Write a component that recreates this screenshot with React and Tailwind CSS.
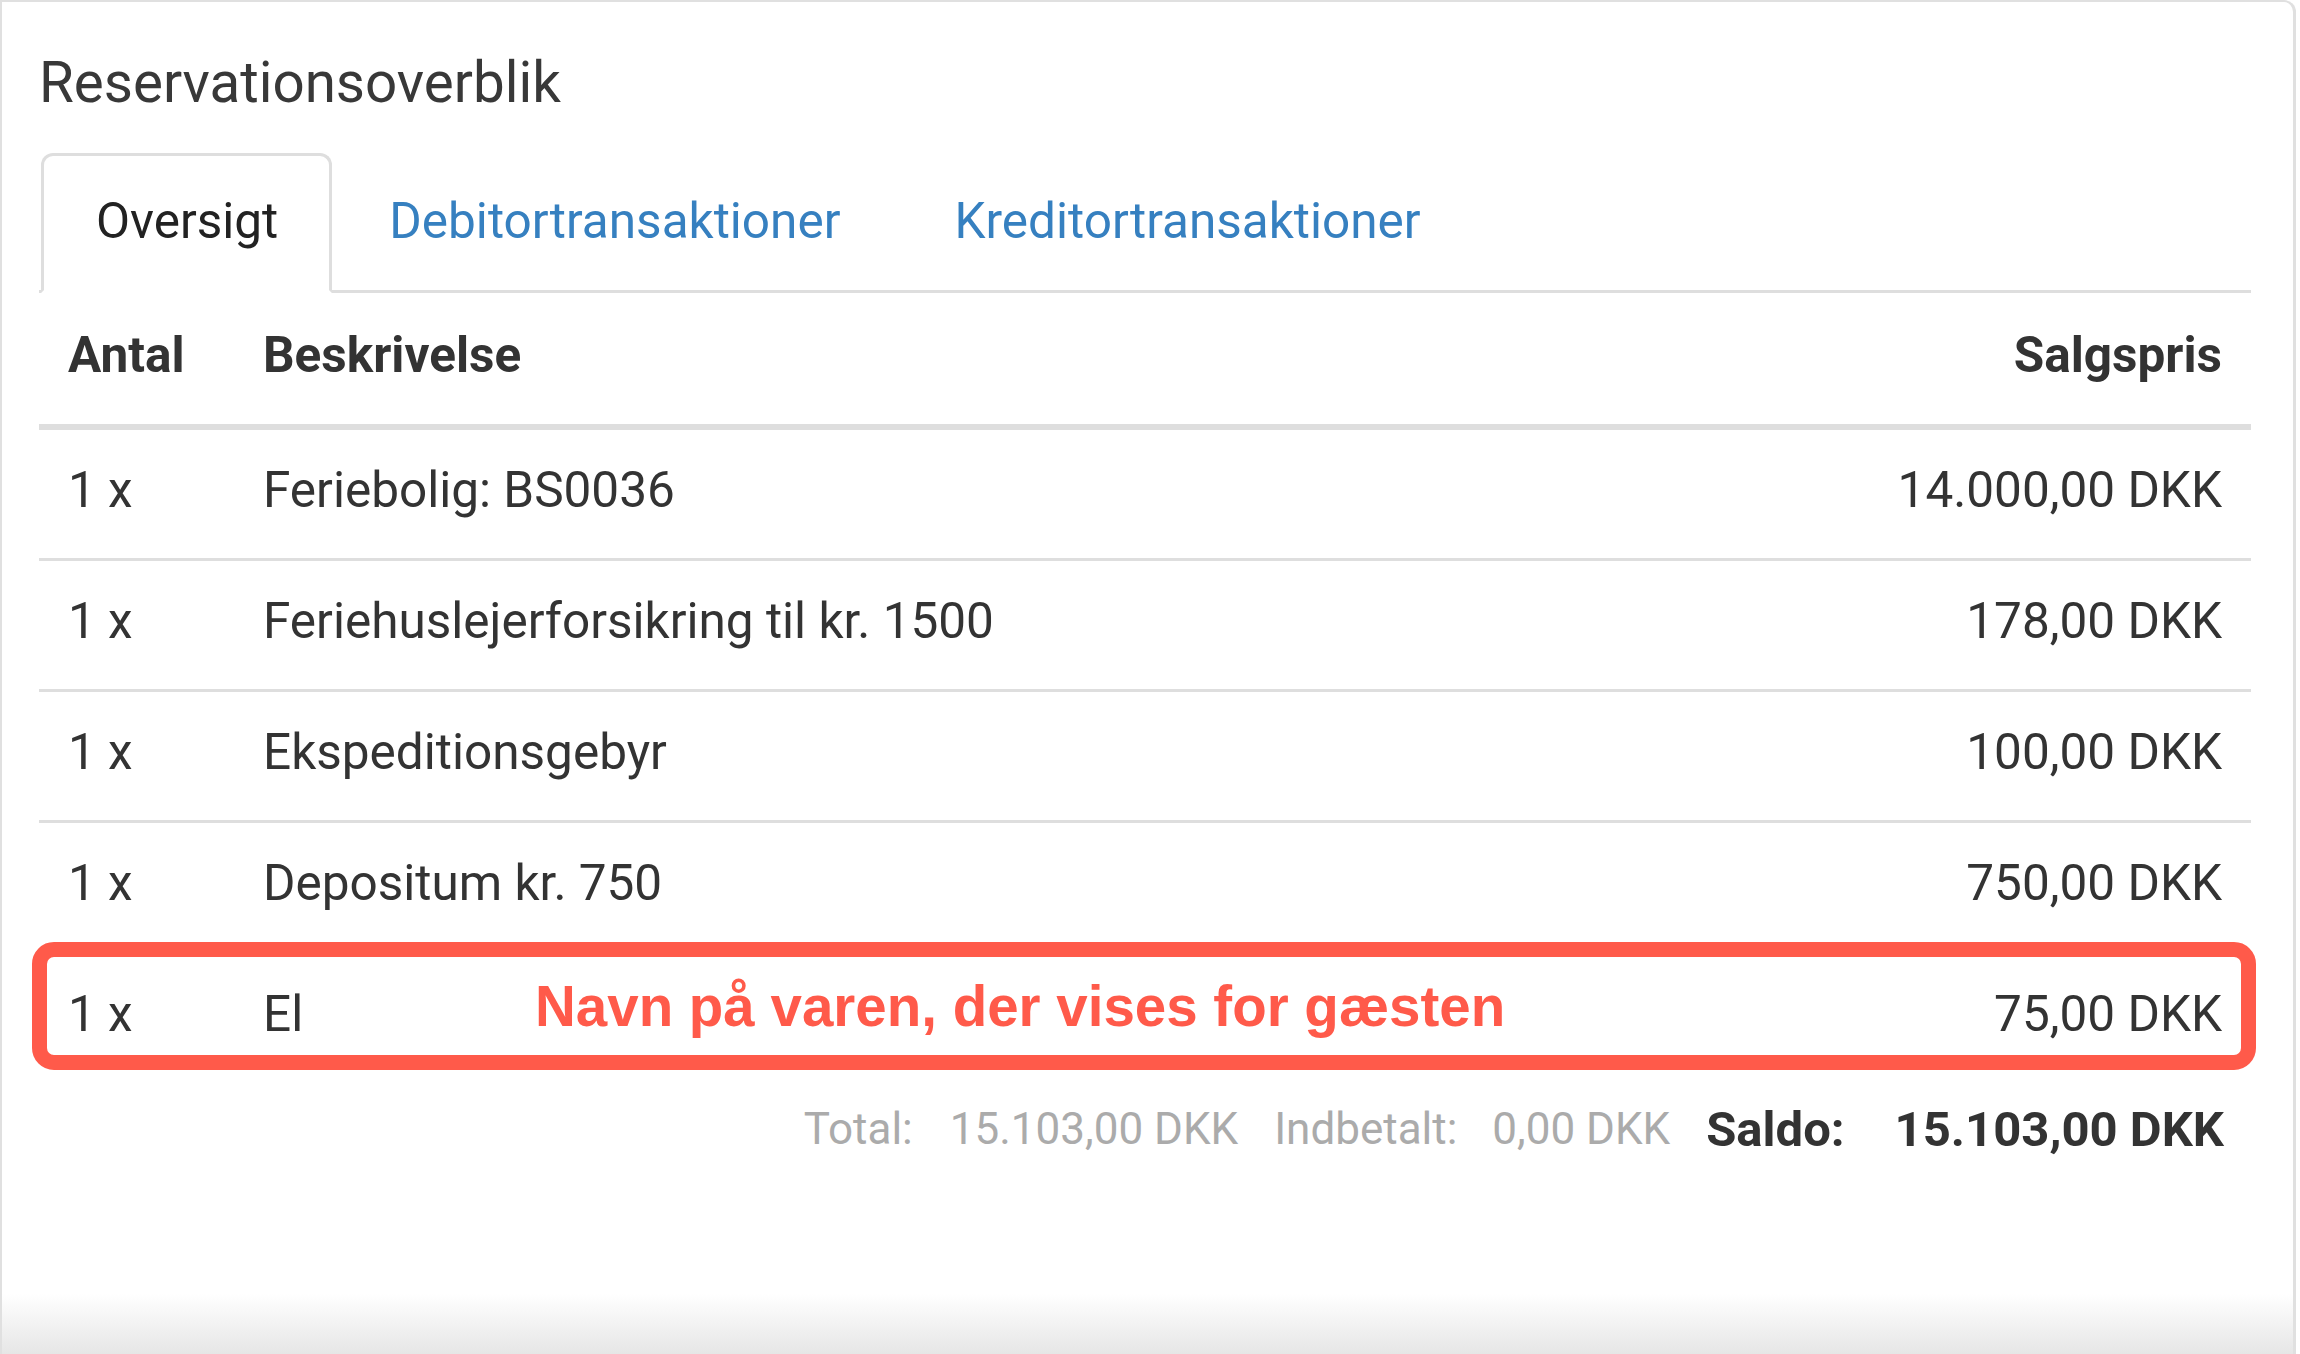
const ROWS = [
  { qty: "1 x", desc: "Feriebolig: BS0036", price: "14.000,00 DKK" },
  { qty: "1 x", desc: "Feriehuslejerforsikring til kr. 1500", price: "178,00 DKK" },
  { qty: "1 x", desc: "Ekspeditionsgebyr", price: "100,00 DKK" },
  { qty: "1 x", desc: "Depositum kr. 750", price: "750,00 DKK" },
  { qty: "1 x", desc: "El", price: "75,00 DKK", marked: true },
];

const TABS = ["Oversigt", "Debitortransaktioner", "Kreditortransaktioner"];

const CELL = "pt-[31px] pb-[39px] px-[29px] leading-[58px]";
const HEAD = "pt-[33px] pb-[40px] px-[29px] leading-[58px] font-bold border-b-[3px] border-[#dedede]";

export default function App() {
  return (
    <div className="w-[2300px] h-[1354px] bg-white font-['Roboto',sans-serif] text-[#333] overflow-hidden">
      <div className="relative mr-[4px] h-full flex flex-col border-l-2 border-t-2 border-r-[3px] border-[#e0e0e0] rounded-tr-[12px] pl-[37px] pr-[42px]">
        <h1 className="mt-[48px] text-[56.5px] leading-[66px] text-[#383838] font-normal">Reservationsoverblik</h1>

        <ul className="mt-[37px] flex border-b-[3px] border-[#dedede] pl-[2px]">
          {TABS.map((t, i) => (
            <li
              key={t}
              className={[
                "-mb-[3px] rounded-t-[12px] border-[3px] pt-[36px] pb-[40px] text-[49.5px] leading-[58px]",
                i === 0
                  ? "border-[#dedede] border-b-white bg-white text-[#222] pl-[52px] pr-[51px]"
                  : "border-transparent text-[#3680c0] px-[54px]",
              ].join(" ")}
            >
              {t}
            </li>
          ))}
        </ul>

        <div className="grid grid-cols-[195px_1fr_auto] text-[49.5px]">
          <div className={HEAD}>Antal</div>
          <div className={HEAD}>Beskrivelse</div>
          <div className={`${HEAD} text-right`}>Salgspris</div>

          {ROWS.map((r) => (
            <div key={r.desc} className="contents">
              <div className={`relative border-t-[3px] border-[#dedede] ${CELL}`}>
                {r.marked ? (
                  <>
                    <div className="pointer-events-none absolute left-[-7px] top-[-12px] h-[128px] w-[2224px] rounded-[22px] border-[15px] border-[#ff5a4a]" />
                    <span className="absolute left-[496px] top-[25px] whitespace-nowrap font-['Liberation_Sans',Arial,sans-serif] text-[56.5px] leading-none font-bold text-[#ff5a4a]">
                      Navn på varen, der vises for gæsten
                    </span>
                  </>
                ) : null}
                {r.qty}
              </div>
              <div className={`border-t-[3px] border-[#dedede] ${CELL}`}>{r.desc}</div>
              <div className={`border-t-[3px] border-[#dedede] text-right whitespace-nowrap ${CELL}`}>{r.price}</div>
            </div>
          ))}
        </div>

        <div className="mt-[18px] flex items-center justify-end pr-[27px] whitespace-nowrap">
          <span className="text-[44px] leading-[53px] text-[#ababab]">Total:</span>
          <span className="ml-[37px] text-[44px] leading-[53px] text-[#ababab]">15.103,00 DKK</span>
          <span className="ml-[36px] text-[44px] leading-[53px] text-[#ababab]">Indbetalt:</span>
          <span className="ml-[35px] text-[44px] leading-[53px] text-[#ababab]">0,00 DKK</span>
          <span className="ml-[36px] text-[49px] leading-[59px] font-bold text-[#333]">Saldo:</span>
          <span className="ml-[50px] text-[49px] leading-[59px] font-bold text-[#333]">15.103,00 DKK</span>
        </div>

        <div className="mt-auto -ml-[37px] -mr-[42px] h-[60px] bg-gradient-to-b from-white to-[#e6e6e6]" />
      </div>
    </div>
  );
}
